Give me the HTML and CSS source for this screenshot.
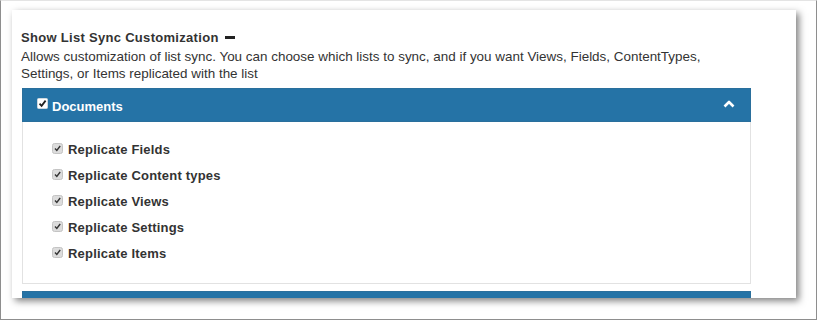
FILE: index.html
```html
<!DOCTYPE html>
<html lang="en">
<head>
    <meta charset="UTF-8">
    <title>List Sync Customization</title>
    <link rel="stylesheet" href="styles.css">
</head>
<body>
    <div class="frame">
        <div class="card">
            <h4 class="title">Show List Sync Customization <span class="minus"></span></h4>
            <p class="desc">Allows customization of list sync. You can choose which lists to sync, and if you want Views, Fields, ContentTypes, Settings, or Items replicated with the list</p>

            <div class="panel">
                <div class="panel-heading">
                    <span class="head-check">
                        <svg width="11" height="11" viewBox="0 0 11 11"><rect x="0.5" y="0.5" width="10" height="10" rx="1" fill="#fff" stroke="#cfd8de"/><path d="M2.5 5.6 L4.6 7.8 L8.6 2.6" fill="none" stroke="#222" stroke-width="1.8"/></svg>
                    </span>
                    <span class="panel-title">Documents</span>
                    <svg class="caret" width="12" height="8" viewBox="0 0 12 8"><path d="M1.5 6.5 L6 2 L10.5 6.5" fill="none" stroke="#fff" stroke-width="2.6" stroke-linejoin="round"/></svg>
                </div>
                <div class="panel-body">
                    <label class="opt"><span class="box"><svg width="11" height="11" viewBox="0 0 11 11"><rect x="0.5" y="0.5" width="10" height="10" rx="2" fill="#dcdcdc" stroke="#c4c4c4"/><path d="M3 5.6 L4.8 7.4 L8.2 3" fill="none" stroke="#333" stroke-width="1.4"/></svg></span>Replicate Fields</label>
                    <label class="opt"><span class="box"><svg width="11" height="11" viewBox="0 0 11 11"><rect x="0.5" y="0.5" width="10" height="10" rx="2" fill="#dcdcdc" stroke="#c4c4c4"/><path d="M3 5.6 L4.8 7.4 L8.2 3" fill="none" stroke="#333" stroke-width="1.4"/></svg></span>Replicate Content types</label>
                    <label class="opt"><span class="box"><svg width="11" height="11" viewBox="0 0 11 11"><rect x="0.5" y="0.5" width="10" height="10" rx="2" fill="#dcdcdc" stroke="#c4c4c4"/><path d="M3 5.6 L4.8 7.4 L8.2 3" fill="none" stroke="#333" stroke-width="1.4"/></svg></span>Replicate Views</label>
                    <label class="opt"><span class="box"><svg width="11" height="11" viewBox="0 0 11 11"><rect x="0.5" y="0.5" width="10" height="10" rx="2" fill="#dcdcdc" stroke="#c4c4c4"/><path d="M3 5.6 L4.8 7.4 L8.2 3" fill="none" stroke="#333" stroke-width="1.4"/></svg></span>Replicate Settings</label>
                    <label class="opt"><span class="box"><svg width="11" height="11" viewBox="0 0 11 11"><rect x="0.5" y="0.5" width="10" height="10" rx="2" fill="#dcdcdc" stroke="#c4c4c4"/><path d="M3 5.6 L4.8 7.4 L8.2 3" fill="none" stroke="#333" stroke-width="1.4"/></svg></span>Replicate Items</label>
                </div>
            </div>

            <div class="panel">
                <div class="panel-heading"></div>
            </div>
        </div>
    </div>
</body>
</html>
```

FILE: styles.css
```css
body { margin: 0; background: #fff; font-family: "Liberation Sans", Arial, sans-serif; color: #333; }

/* screenshot frame */
.frame {
    box-sizing: border-box;
    width: 817px;
    height: 320px;
    border: 1px solid #8e8e8e;
    border-top-color: #e4e4e4;
    padding: 9px 0 0 11px;
}

.card {
    box-sizing: border-box;
    width: 784px;
    height: 288px;
    background: #fff;
    box-shadow: 3px 3px 7px rgba(0, 0, 0, 0.5);
    padding: 18px 0 0 9px;
    overflow: hidden;
}

.title {
    margin: 0;
    font-size: 13px;
    line-height: 20px;
    font-weight: bold;
    color: #333;
    letter-spacing: 0.3px;
}

.minus {
    display: inline-block;
    width: 10px;
    height: 3px;
    background: #222;
    vertical-align: 3px;
    margin-left: 2px;
}

.desc {
    margin: 0 0 6px;
    width: 720px;
    font-size: 13.45px;
    line-height: 17px;
    color: #333;
}

/* panels */
.panel {
    width: 729px;
    margin-left: 1px;
    margin-bottom: 7px;
}

.panel-heading {
    box-sizing: border-box;
    height: 34px;
    background: #2573a6;
    border: 1px solid #2a6f9c;
    display: flex;
    align-items: center;
    padding: 2px 15px 0 14px;
    color: #fff;
}

.head-check { display: flex; margin-right: 4px; margin-top: -6px; }

.panel-title {
    font-size: 13px;
    font-weight: bold;
    flex: 1;
}

.caret { margin-bottom: 4px; }

.panel-body {
    border: 1px solid #e2e2e2;
    border-top: none;
    padding: 15px 0 16px 29px;
}

.opt {
    display: flex;
    align-items: center;
    font-size: 13px;
    font-weight: bold;
    line-height: 26px;
    color: #333;
    letter-spacing: 0.2px;
}

.opt .box { display: flex; margin-right: 5px; margin-top: -4px; }
```
